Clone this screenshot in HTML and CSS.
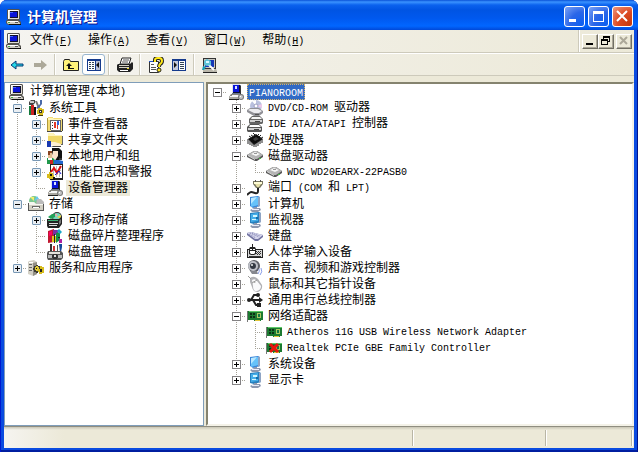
FILE: index.html
```
<!DOCTYPE html>
<html lang="zh-CN">
<head>
  <meta charset="UTF-8">
  <title>计算机管理</title>
  <link rel="stylesheet" href="styles.css">
</head>
<body>
  <!-- icon set, 16x16 each -->
  <svg class="sprite" aria-hidden="true">
    <symbol id="pc" viewBox="0 0 16 16">
      <path d="M1 1l1-1h11l1 1v9l-1 1H2l-1-1z" fill="#55534e"/><path d="M2 1h11v9H2z" fill="#dedbd2"/><path d="M2 1h10v1H3v8H2z" fill="#fff"/>
      <path d="M4 2h8v7H4z" fill="#10102c"/><path d="M4 3h7v5H4z" fill="#0a14d8"/><path d="M4 3h3v1H4z" fill="#4464ff"/>
      <path d="M1 11h12l2 2v3H2l-2-2v-2z" fill="#55534e"/><path d="M1 12h11l2 2v1H2l-1-1z" fill="#cfccc3"/><path d="M2 12h10v1H2z" fill="#fff"/>
      <path d="M9 13h3v1H9z" fill="#555"/><path d="M2 13h2v1H2z" fill="#4a4"/><path d="M3 15h12v1H3z" fill="#111"/>
    </symbol>
    <symbol id="devmgr" viewBox="0 0 16 16">
      <path d="M4 0h8v1h1v9H4z" fill="#6b7690"/><path d="M4 0h8v9H4z" fill="#dfe3ee"/><path d="M5 1h7v8H5z" fill="#10102c"/><path d="M5 1h6v7H5z" fill="#0a14d8"/><path d="M7 2h2v3H7z" fill="#d7e2ff"/>
      <path d="M12 2h1v8h-1z" fill="#333"/><path d="M3 10h10l1 3H1z" fill="#85837c"/><path d="M4 11h8v1H4zM2 12h9v1H2z" fill="#f5f5f5"/><path d="M1 13h10v2H1z" fill="#a9a7a0"/><path d="M1 15h10v1H1z" fill="#222"/>
      <circle cx="13" cy="13" r="3" fill="#777"/><circle cx="13" cy="13" r="2" fill="#c5c5c5"/><path d="M12 12h1v1h-1z" fill="#fff"/>
    </symbol>
    <symbol id="tools" viewBox="0 0 16 16">
      <path d="M1 2l2-2h4v3l-2 2H1z" fill="#444"/><path d="M2 1h4v2H2z" fill="#c9c9c9"/><path d="M3 5h3v10H3z" fill="#c22"/><path d="M1 6h2v9H1z" fill="#147a3c"/>
      <path d="M7 1h2l4 9-2 1z" fill="#777"/><path d="M12 0h2v4l-4 5-2-1 4-4z" fill="#4a6aa8"/><path d="M6 7h2v8H6z" fill="#111"/>
      <path d="M10 8h4v1h2v4h-1v2h-4v-1h-2v-4h1z" fill="#d9bd1d"/><path d="M11 10h3v3h-3z" fill="#333"/><path d="M12 11h1v1h-1z" fill="#fff"/><path d="M10 15h5v1h-5z" fill="#443c10"/>
    </symbol>
    <symbol id="event" viewBox="0 0 16 16">
      <path d="M0 2h1V1h5v1h9v13H0z" fill="#f3dc74"/><path d="M1 2h5l1 1h7v1H1z" fill="#fff6bb"/><path d="M0 15h15v1H0zM15 3h1v12h-1z" fill="#444"/><path d="M0 2h1v13H0z" fill="#b29a3a"/>
      <path d="M4 4h9v10H4z" fill="#fff"/><path d="M4 4h9v1H4zM3 4h1v10H3zM13 4h1v11h-1zM4 14h10v1H4z" fill="#666"/>
      <path d="M5 6h1v1H5zm0 3h1v1H5zm0 3h1v1H5z" fill="#333"/><path d="M7 6h2v6H7z" fill="#e23a2a"/><path d="M10 5h2v4h-2z" fill="#36d"/><path d="M10 9h1v4h-1z" fill="#e23a2a"/>
    </symbol>
    <symbol id="share" viewBox="0 0 16 16">
      <path d="M1 1h5l2 2h7v9H1z" fill="#f0d868"/><path d="M1 1h5l2 2h7v1H1z" fill="#fff5ba"/><path d="M15 4h1v9H6v-1h9z" fill="#666"/>
      <path d="M0 9h4v6H0z" fill="#1838b0"/><path d="M4 10h4l6 2v2H7l-3-1z" fill="#fbeed2"/><path d="M4 14h10v1H6z" fill="#444"/>
    </symbol>
    <symbol id="users" viewBox="0 0 16 16">
      <path d="M5 0h7l3 3v7l-2 2H9L5 6z" fill="#111"/><path d="M6 3h5v5l-2 3H7L5 8z" fill="#fbe3cb"/>
      <path d="M1 5h4v3l1 2H1z" fill="#e3bd92"/><path d="M1 3h4v2H3v2H1z" fill="#842"/>
      <path d="M0 10h6l3 3v3H0z" fill="#20994c"/><path d="M7 12h5l4 1v3H7z" fill="#26c"/><path d="M1 10h4v2H1z" fill="#fff"/><path d="M3 12h3v4H3z" fill="#c22"/><path d="M12 10h3v2h-3z" fill="#333"/>
    </symbol>
    <symbol id="perf" viewBox="0 0 16 16">
      <path d="M3 0h13v16H3z" fill="#222"/><path d="M4 1h11v13H4z" fill="#fff"/><path d="M6 2h1v11H6zm3 0h1v11H9zm3 0h1v11h-1zM4 6h10v1H4z" fill="#bbb"/>
      <path d="M4 8l3-4 3 5 4-7" stroke="#d11" stroke-width="2" fill="none"/><path d="M8 11l4-4 2 3" stroke="#22c" fill="none"/>
      <path d="M2 8h2v1h2v2h1v2H6v2H2v-1H0v-4h2z" fill="#d8bc1c"/><path d="M3 10h2v2H3z" fill="#111"/><path d="M6 13h2v3H4v-1h2z" fill="#111"/>
    </symbol>
    <symbol id="storage" viewBox="0 0 16 16">
      <circle cx="6" cy="5" r="5" fill="#7cc890"/><path d="M6 5L2 1h4z" fill="#f3ef6d"/><path d="M6 5l5-2-2-3z" fill="#67c8ed"/>
      <path d="M9 3h4l3 3v3H8z" fill="#bbb"/><path d="M1 6h5l2 2h8v7H1z" fill="#d1cec2"/><path d="M1 6h5l2 2h8v1H1z" fill="#f5f5f0"/>
      <path d="M0 7h1v7h14V8h1v7H0z" fill="#555"/><path d="M4 10h8v2H4z" fill="#666"/><path d="M5 11h6v1H5z" fill="#fff"/>
    </symbol>
    <symbol id="removable" viewBox="0 0 16 16">
      <circle cx="10" cy="5" r="5" fill="#333"/><circle cx="10" cy="5" r="4" fill="#79d8bb"/><path d="M10 5l4-2v4z" fill="#e8d34c"/><path d="M10 5L7 2h3z" fill="#f1a3b1"/>
      <path d="M1 5l4-3h3v3l-4 2z" fill="#22a058"/><path d="M0 7h12l3-3v8l-3 4H1l-1-2z" fill="#222"/><path d="M1 8h10v1H1z" fill="#3bb071"/><path d="M2 11h9v1H2zM2 13h8v1H2z" fill="#ddd"/><path d="M12 9l2-2v4l-2 2z" fill="#777"/>
    </symbol>
    <symbol id="defrag" viewBox="0 0 16 16">
      <path d="M1 3l6-2v13l-6 1z" fill="#c01830"/><path d="M2 4l3-1v4l-3 1z" fill="#f06"/><path d="M6 2h5v5H6z" fill="#7c2fa5"/><path d="M5 8h5v6H5z" fill="#e4c51e"/>
      <path d="M9 5l4-1v8l-4 3z" fill="#169246"/><path d="M12 1l3 3-2 2-3-3z" fill="#18a6c8"/><path d="M12 11h3v4h-3z" fill="#b020a0"/><path d="M7 6h1v9H7zM11 9h2v1h-2z" fill="#222"/>
    </symbol>
    <symbol id="diskmgr" viewBox="0 0 16 16">
      <path d="M3 0h2v7H3z" fill="#333"/><path d="M6 2h2v6H6z" fill="#c33"/><path d="M10 1h1v7h-1z" fill="#555"/><path d="M12 0h3v3l-1 5h-1z" fill="#15489c"/>
      <path d="M1 7h13l2 2v5l-2 2H1l-1-2V9z" fill="#555"/><path d="M2 8h11v2H2z" fill="#e5e3dd"/><path d="M1 11h5v3H1zM11 11h4v3h-4z" fill="#bbb"/><path d="M6 10h4v1h1v3h-1v1H6v-1H5v-3h1z" fill="#333"/><path d="M7 11h2v2H7z" fill="#ddd"/>
    </symbol>
    <symbol id="services" viewBox="0 0 16 16">
      <path d="M1 1l5-1 3 2v12l-4 2-5-2V2z" fill="#d3d0c5"/><path d="M5 3l4-1v12l-4 2z" fill="#918e85"/><path d="M1 4h3v1H1zM1 7h3v1H1zM1 10h3v1H1z" fill="#666"/><path d="M1 2h4v1H1z" fill="#fff"/>
      <path d="M8 5h2v1h2v2h1v2h-1v2h-2v1H8v-1H6v-2H5V8h1V6h2z" fill="#3d3b2e"/><path d="M8 6h2v1h1v4H8v-1H7V7h1z" fill="#e2cb35"/><path d="M8 8h1v1H8z" fill="#111"/>
      <path d="M12 6h2v1h2v6h-2v1h-3v-2h-1V9h2z" fill="#d7bc1d"/><path d="M12 9h2v3h-2z" fill="#222"/>
    </symbol>
    <symbol id="cd" viewBox="0 0 16 16">
      <circle cx="9" cy="6" r="6" fill="#b9c0de"/><path d="M9 6L5 1l4-1z" fill="#fff"/><path d="M9 6l6-2v4z" fill="#ecc9ea"/><circle cx="9" cy="6" r="2" fill="#fff" stroke="#9a9dc0"/>
      <path d="M0 10l3-2h9l4 3v2l-4 3H7l-7-4z" fill="#909096"/><path d="M1 10l2-1h8l4 2-3 2H7z" fill="#ececf0"/><path d="M8 14h4v1H8z" fill="#555"/>
    </symbol>
    <symbol id="ide" viewBox="0 0 16 16">
      <path d="M5 0h8l3 3v4l-1 1H3L2 7V3z" fill="#666"/><path d="M5 1h8l2 2H4z" fill="#f4f4f4"/><path d="M3 4h12v2H3z" fill="#d0d0d0"/>
      <path d="M3 8h9l3 3v4l-1 1H1l-1-1v-4z" fill="#555"/><path d="M3 9h9l2 2H2z" fill="#fff"/><path d="M1 12h13v2H1z" fill="#d0d0d0"/><path d="M8 5h5v1H8zM7 13h5v1H7z" fill="#444"/>
    </symbol>
    <symbol id="cpu" viewBox="0 0 16 16">
      <path d="M1 7l8-5 7 5-9 6z" fill="#0d0d0d"/><path d="M6 7l3-2 3 2-4 2z" fill="#3c3c3c"/>
      <path d="M2 4l3 2M4 3l3 2M6 1l3 3M12 2l-2 2M14 3l-2 2M16 5l-3 2M1 7v5M3 8v5M5 10v4M7 11v4M9 11v4M11 9v5M13 8v4M15 7v4" stroke="#222" fill="none"/>
    </symbol>
    <symbol id="disk" viewBox="0 0 16 16">
      <path d="M0 7l7-4h3l6 4v2l-6 4H8L0 9z" fill="#555"/><path d="M0 7l7-4h3l6 4-6 4H8z" fill="#b5b5b5"/><path d="M4 6l4-2 5 2-4 2z" fill="#f7f7f7"/><path d="M7 5h3v1H7z" fill="#999"/><path d="M1 8l7 4v-1L1 7z" fill="#ddd"/><path d="M12 10h2v1h-2z" fill="#4b4"/>
    </symbol>
    <symbol id="port" viewBox="0 0 16 16">
      <path d="M6 1h10v3l-3 4H9L6 4z" fill="#77755f"/><path d="M7 2h8v2H7z" fill="#fffdd5"/><path d="M8 4h6l-2 3h-2z" fill="#e5dfa5"/><path d="M8 0h1v2H8zM13 0h1v2h-1z" fill="#555"/>
      <path d="M11 8v3q0 3-3 2t-4-1-4 3" stroke="#222" stroke-width="2" fill="none"/>
    </symbol>
    <symbol id="computer" viewBox="0 0 16 16">
      <path d="M3 1l8-1 2 1v9l-7 2-3-2z" fill="#3b86d8"/><path d="M4 2l7-1v8l-7 2z" fill="#66c2fa"/><path d="M4 2l6-1-6 7z" fill="#b9e8ff"/><path d="M11 1h2v9l-2 1z" fill="#8fa4c4"/>
      <path d="M7 11h3v1h3l1 2-3 2H5l-2-2 4-2z" fill="#8d98b0"/><path d="M5 13h7v1H5z" fill="#eef"/>
    </symbol>
    <symbol id="monitor" viewBox="0 0 16 16">
      <path d="M3 1l9-1 2 1v9l-7 2-4-1z" fill="#277fbd"/><path d="M4 2l7-1v8l-7 1z" fill="#45aeea"/><path d="M6 3h4v2H6zM5 7h4v1H5z" fill="#d5f6ff"/><path d="M9 5h2v2H9z" fill="#186ca9"/><path d="M12 1h2v9l-2 1z" fill="#8fa4c4"/>
      <path d="M7 11h3v1h3l1 2-3 2H5l-2-2 4-2z" fill="#8d98b0"/><path d="M5 13h7v1H5z" fill="#e7ecf8"/>
    </symbol>
    <symbol id="keyboard" viewBox="0 0 16 16">
      <path d="M0 5l4-1 12 3v2l-5 4H8L0 7z" fill="#7072a0"/><path d="M0 5l4-1 12 3-5 4H8z" fill="#d5d5ec"/>
      <path d="M3 5l9 4M5 5l8 3M2 6l7 4" stroke="#8183b0" stroke-dasharray="1 1" fill="none"/>
    </symbol>
    <symbol id="hid" viewBox="0 0 16 16">
      <path d="M0 5h16v9H0z" fill="#222"/><path d="M1 6h14v7H1z" fill="#d8d8d8"/><path d="M9 7h1v1H9zm2 0h1v1h-1zm2 0h1v1h-1zM10 8h1v1h-1zm2 0h1v1h-1zM9 9h1v1H9zm2 0h1v1h-1zm2 0h1v1h-1zM10 10h1v1h-1zm2 0h1v1h-1zM2 12h12v1H2z" fill="#333"/>
      <path d="M3 3h5l1 2v5l-2 1H4l-2-1V5z" fill="#222"/><path d="M3 5h5v4l-1 1H4L3 9z" fill="#fff"/><path d="M5 0h1v7H5zM3 6h5v1H3z" fill="#222"/>
    </symbol>
    <symbol id="sound" viewBox="0 0 16 16">
      <circle cx="7" cy="6" r="6" fill="#5d5f67"/><circle cx="6" cy="6" r="5" fill="#bfc1c8"/><circle cx="6" cy="6" r="3" fill="#333842"/><circle cx="5" cy="5" r="1" fill="#eee"/><path d="M3 11h7l1 3H5z" fill="#85878e"/>
      <path d="M12 9q1 2-1 5M14 8q2 4-1 7" stroke="#8a9ee8" fill="none"/>
    </symbol>
    <symbol id="mouse" viewBox="0 0 16 16">
      <path d="M3 2q4-3 8 1l4 6q1 5-4 7-5 0-6-5L3 6z" fill="#b1b1b5"/><path d="M5 4q3-2 5 1l4 5q0 4-4 5t-4-5z" fill="#f9f9fb"/><path d="M5 7l5-3M7 5l1 2" stroke="#999" fill="none"/><path d="M4 3L1 0" stroke="#999"/>
    </symbol>
    <symbol id="usb" viewBox="0 0 16 16">
      <path d="M1 8h12M4 8l3-5h4M6 8l3 5h3" stroke="#222" stroke-width="2" fill="none"/><circle cx="2" cy="8" r="2" fill="#222"/><path d="M12 5l4 3-4 3z" fill="#222"/><circle cx="11" cy="3" r="2" fill="#222"/><path d="M10 11h4v4h-4z" fill="#222"/>
    </symbol>
    <symbol id="net" viewBox="0 0 16 16">
      <path d="M0 3h1v11H0z" fill="#777"/><path d="M1 3h15v9h-2v1H7v-1H1z" fill="#1c7a31"/><path d="M2 3h14v1H2z" fill="#5fca68"/>
      <path d="M3 5h2v2H3zM6 5h2v2H6zM3 8h2v2H3zM6 8h2v2H6z" fill="#0c3015"/><path d="M10 5h4v5h-4z" fill="#a9c860"/><path d="M11 6h2v3h-2z" fill="#174"/><path d="M8 12h5v1H8z" fill="#e3c63b"/>
    </symbol>
    <symbol id="netoff" viewBox="0 0 16 16">
      <use href="#net"/><path d="M4 4l8 8M12 4l-8 8" stroke="#e8150c" stroke-width="3" fill="none"/>
    </symbol>
    <symbol id="back" viewBox="0 0 16 16">
      <path d="M2 8l5-4v3h7v2H7v3z" fill="#25d8e6" stroke="#053a78"/>
    </symbol>
    <symbol id="forward" viewBox="0 0 16 16"><path d="M15 8L9 3v3H2v4h7v3z" fill="#aca899"/></symbol>
    <symbol id="up" viewBox="0 0 16 16">
      <path d="M.5 4.500l1-2h5l1 2h8v9H.5z" fill="#fff27a" stroke="#222"/><path d="M6 6L3 9h2v3h6v-1H7V9h2z" fill="#111"/>
    </symbol>
    <symbol id="panel" viewBox="0 0 16 16">
      <path d="M1 2h14v12H1z" fill="#153a8c"/><path d="M2 4h7v9H2z" fill="#fff"/><path d="M10 4h4v9h-4z" fill="#b9bfd5"/><path d="M3 5h2v1H3zM3 7h2v1H3zM3 9h2v1H3zM3 11h2v1H3zM6 5h2v1H6zM6 7h2v1H6zM6 9h2v1H6zM6 11h2v1H6z" fill="#345"/><path d="M13 5v6l-3-3z" fill="#111"/>
    </symbol>
    <symbol id="actions" viewBox="0 0 16 16">
      <path d="M1 2h14v12H1z" fill="#153a8c"/><path d="M2 4h5v9H2z" fill="#c4c9da"/><path d="M8 4h6v9H8z" fill="#fff"/><path d="M9 5h4v1H9zM9 7h4v1H9zM9 9h4v1H9zM9 11h4v1H9z" fill="#345"/><path d="M3 5v6l3-3z" fill="#111"/>
    </symbol>
    <symbol id="print" viewBox="0 0 16 16">
      <path d="M5 1h9l-2 6H3z" fill="#fff" stroke="#222"/><path d="M6 3h6M5 5h6" stroke="#555"/>
      <path d="M1 7h12l2-2 1 1v6l-3 3H2l-2-2V8z" fill="#222"/><path d="M2 8h10v1H2zM2 10h10v1H2z" fill="#d5d2c5"/><path d="M3 13h8v1H3z" fill="#fff"/><path d="M10 11h2v1h-2z" fill="#e8d528"/>
    </symbol>
    <symbol id="help" viewBox="0 0 16 16">
      <path d="M1.500 4.500h9v11h-9z" fill="#fff" stroke="#333"/><path d="M3 7h3v1H3zM3 10h5v1H3zM3 12h5v1H3z" fill="#555"/><path d="M1 4h5v1H1z" fill="#25c"/>
      <path d="M7 5V3q0-2 3-2h1q3 0 3 3 0 2-2 3-1 1-1 3" stroke="#222" stroke-width="4" fill="none"/><path d="M7 5V3q0-2 3-2h1q3 0 3 3 0 2-2 3-1 1-1 3" stroke="#ffe818" stroke-width="2" fill="none"/><circle cx="11" cy="13" r="2" fill="#ffe818" stroke="#222"/>
    </symbol>
    <symbol id="scan" viewBox="0 0 16 16">
      <path d="M1 1h13v11H1z" fill="#333"/><path d="M2 2h11v9H2z" fill="#c8c6be"/><path d="M3 3h9v7H3z" fill="#1638b8"/><path d="M1 12h13l1 2v2H1z" fill="#bbb8ac"/><path d="M1 15h14v1H1z" fill="#222"/>
      <path d="M6 7l6 6" stroke="#fff" stroke-width="2"/><path d="M2 4l3-2 4 2v4L5 9 2 8z" fill="#5fc4d8"/><path d="M4 4h3v2H4z" fill="#d8f8ff"/><path d="M1 9l3 1-2 3H0z" fill="#16a0b8"/>
    </symbol>
  </svg>

  <div class="window">
    <header class="titlebar">
      <svg class="icon"><use href="#pc"/></svg>
      <h1>计算机管理</h1>
      <button class="caption" aria-label="最小化"><svg viewBox="0 0 19 19"><path d="M4 12h7v3H4z" fill="#fff"/></svg></button>
      <button class="caption" aria-label="最大化"><svg viewBox="0 0 19 19"><path d="M4 4h11v11H4zM5 7v7h9V7z" fill="#fff" fill-rule="evenodd"/></svg></button>
      <button class="caption close" aria-label="关闭"><svg viewBox="0 0 19 19"><path d="M4 4l10 10M14 4L4 14" stroke="#fff" stroke-width="2"/></svg></button>
    </header>

    <nav class="menubar">
      <svg class="icon"><use href="#pc"/></svg>
      <button>文件<span class="en">(<u>F</u>)</span></button>
      <button>操作<span class="en">(<u>A</u>)</span></button>
      <button>查看<span class="en">(<u>V</u>)</span></button>
      <button>窗口<span class="en">(<u>W</u>)</span></button>
      <button>帮助<span class="en">(<u>H</u>)</span></button>
      <div class="mdi">
        <button aria-label="最小化窗口"><svg viewBox="0 0 14 12"><path d="M3 8h7v2H3z" fill="#000"/></svg></button>
        <button aria-label="还原窗口"><svg viewBox="0 0 14 12"><path d="M4 1h7v6H9V6h1V3H5v1H4zM2 4h7v6H2zM3 6v3h5V6z" fill="#000" fill-rule="evenodd"/></svg></button>
        <button aria-label="关闭窗口" disabled><svg viewBox="0 0 14 12"><path d="M3 2l7 7M10 2l-7 7" stroke="#aca899" stroke-width="2"/></svg></button>
      </div>
    </nav>

    <div class="toolbar">
      <button aria-label="后退"><svg class="icon"><use href="#back"/></svg></button>
      <button aria-label="前进" disabled><svg class="icon"><use href="#forward"/></svg></button>
      <span class="sep"></span>
      <button aria-label="向上"><svg class="icon"><use href="#up"/></svg></button>
      <button class="pressed" aria-label="显示/隐藏控制台树"><svg class="icon"><use href="#panel"/></svg></button>
      <span class="sep"></span>
      <button aria-label="打印"><svg class="icon"><use href="#print"/></svg></button>
      <span class="sep"></span>
      <button aria-label="帮助"><svg class="icon"><use href="#help"/></svg></button>
      <button aria-label="显示/隐藏操作窗格"><svg class="icon"><use href="#actions"/></svg></button>
      <span class="sep"></span>
      <button aria-label="扫描检测硬件改动"><svg class="icon"><use href="#scan"/></svg></button>
    </div>

    <main class="panes">
      <section class="pane console">
        <div class="row"><svg class="icon"><use href="#pc"/></svg><span class="label">计算机管理<span class="en">(</span>本地<span class="en">)</span></span></div>
        <ul class="tree">
          <li>
            <div class="row"><span class="twig"><button class="toggle open" aria-label="折叠"></button></span><svg class="icon"><use href="#tools"/></svg><span class="label">系统工具</span></div>
            <ul class="tree">
              <li><div class="row"><span class="twig"><button class="toggle" aria-label="展开"></button></span><svg class="icon"><use href="#event"/></svg><span class="label">事件查看器</span></div></li>
              <li><div class="row"><span class="twig"><button class="toggle" aria-label="展开"></button></span><svg class="icon"><use href="#share"/></svg><span class="label">共享文件夹</span></div></li>
              <li><div class="row"><span class="twig"><button class="toggle" aria-label="展开"></button></span><svg class="icon"><use href="#users"/></svg><span class="label">本地用户和组</span></div></li>
              <li><div class="row"><span class="twig"><button class="toggle" aria-label="展开"></button></span><svg class="icon"><use href="#perf"/></svg><span class="label">性能日志和警报</span></div></li>
              <li><div class="row"><span class="twig"></span><svg class="icon"><use href="#devmgr"/></svg><span class="label current">设备管理器</span></div></li>
            </ul>
          </li>
          <li>
            <div class="row"><span class="twig"><button class="toggle open" aria-label="折叠"></button></span><svg class="icon"><use href="#storage"/></svg><span class="label">存储</span></div>
            <ul class="tree">
              <li><div class="row"><span class="twig"><button class="toggle" aria-label="展开"></button></span><svg class="icon"><use href="#removable"/></svg><span class="label">可移动存储</span></div></li>
              <li><div class="row"><span class="twig"></span><svg class="icon"><use href="#defrag"/></svg><span class="label">磁盘碎片整理程序</span></div></li>
              <li><div class="row"><span class="twig"></span><svg class="icon"><use href="#diskmgr"/></svg><span class="label">磁盘管理</span></div></li>
            </ul>
          </li>
          <li>
            <div class="row"><span class="twig"><button class="toggle" aria-label="展开"></button></span><svg class="icon"><use href="#services"/></svg><span class="label">服务和应用程序</span></div>
          </li>
        </ul>
      </section>

      <section class="pane devices">
        <ul class="tree">
          <li>
            <div class="row"><span class="twig"><button class="toggle open" aria-label="折叠"></button></span><svg class="icon"><use href="#devmgr"/></svg><span class="label selected"><span class="en">PIANOROOM</span></span></div>
            <ul class="tree">
              <li><div class="row"><span class="twig"><button class="toggle" aria-label="展开"></button></span><svg class="icon"><use href="#cd"/></svg><span class="label"><span class="en">DVD/CD-ROM </span>驱动器</span></div></li>
              <li><div class="row"><span class="twig"><button class="toggle" aria-label="展开"></button></span><svg class="icon"><use href="#ide"/></svg><span class="label"><span class="en">IDE ATA/ATAPI </span>控制器</span></div></li>
              <li><div class="row"><span class="twig"><button class="toggle" aria-label="展开"></button></span><svg class="icon"><use href="#cpu"/></svg><span class="label">处理器</span></div></li>
              <li>
                <div class="row"><span class="twig"><button class="toggle open" aria-label="折叠"></button></span><svg class="icon"><use href="#disk"/></svg><span class="label">磁盘驱动器</span></div>
                <ul class="tree">
                  <li><div class="row"><span class="twig"></span><svg class="icon"><use href="#disk"/></svg><span class="label"><span class="en">WDC WD20EARX-22PASB0</span></span></div></li>
                </ul>
              </li>
              <li><div class="row"><span class="twig"><button class="toggle" aria-label="展开"></button></span><svg class="icon"><use href="#port"/></svg><span class="label">端口<span class="en"> (COM </span>和<span class="en"> LPT)</span></span></div></li>
              <li><div class="row"><span class="twig"><button class="toggle" aria-label="展开"></button></span><svg class="icon"><use href="#computer"/></svg><span class="label">计算机</span></div></li>
              <li><div class="row"><span class="twig"><button class="toggle" aria-label="展开"></button></span><svg class="icon"><use href="#monitor"/></svg><span class="label">监视器</span></div></li>
              <li><div class="row"><span class="twig"><button class="toggle" aria-label="展开"></button></span><svg class="icon"><use href="#keyboard"/></svg><span class="label">键盘</span></div></li>
              <li><div class="row"><span class="twig"><button class="toggle" aria-label="展开"></button></span><svg class="icon"><use href="#hid"/></svg><span class="label">人体学输入设备</span></div></li>
              <li><div class="row"><span class="twig"><button class="toggle" aria-label="展开"></button></span><svg class="icon"><use href="#sound"/></svg><span class="label">声音、视频和游戏控制器</span></div></li>
              <li><div class="row"><span class="twig"><button class="toggle" aria-label="展开"></button></span><svg class="icon"><use href="#mouse"/></svg><span class="label">鼠标和其它指针设备</span></div></li>
              <li><div class="row"><span class="twig"><button class="toggle" aria-label="展开"></button></span><svg class="icon"><use href="#usb"/></svg><span class="label">通用串行总线控制器</span></div></li>
              <li>
                <div class="row"><span class="twig"><button class="toggle open" aria-label="折叠"></button></span><svg class="icon"><use href="#net"/></svg><span class="label">网络适配器</span></div>
                <ul class="tree">
                  <li><div class="row"><span class="twig"></span><svg class="icon"><use href="#net"/></svg><span class="label"><span class="en">Atheros 11G USB Wireless Network Adapter</span></span></div></li>
                  <li><div class="row"><span class="twig"></span><svg class="icon"><use href="#netoff"/></svg><span class="label"><span class="en">Realtek PCIe GBE Family Controller</span></span></div></li>
                </ul>
              </li>
              <li><div class="row"><span class="twig"><button class="toggle" aria-label="展开"></button></span><svg class="icon"><use href="#computer"/></svg><span class="label">系统设备</span></div></li>
              <li><div class="row"><span class="twig"><button class="toggle" aria-label="展开"></button></span><svg class="icon"><use href="#monitor"/></svg><span class="label">显示卡</span></div></li>
            </ul>
          </li>
        </ul>
      </section>
    </main>

    <footer class="statusbar">
      <span class="cell main"></span>
      <span class="cell middle"></span>
      <span class="cell last"></span>
    </footer>
  </div>
</body>
</html>
```
FILE: styles.css
```
* {
  box-sizing: border-box;
}
body {
  margin: 0;
  background: #fff;
  font-family: "Liberation Sans", "Noto Sans CJK SC", sans-serif;
  font-size: 12px;
  line-height: 16px;
  color: #000;
}
button {
  margin: 0;
  padding: 0;
  border: 0;
  background: none;
  font: inherit;
  color: inherit;
}
.sprite {
  position: absolute;
  width: 0;
  height: 0;
}
.icon {
  display: block;
  flex: none;
  width: 16px;
  height: 16px;
}
.en {
  font-family: "Liberation Mono", monospace;
  font-size: 10px;
  white-space: pre;
}

/* window frame */
.window {
  display: flex;
  flex-direction: column;
  height: 100vh;
  padding: 0 4px 4px;
  border-radius: 7px 7px 0 0;
  background: #0a4be0;
  box-shadow: inset 1px 0 #0019cf, inset -1px 0 #00138c, inset 0 -2px #001ea0;
  overflow: hidden;
}
.titlebar {
  display: flex;
  align-items: center;
  flex: none;
  gap: 2px;
  height: 30px;
  margin: 0 -4px;
  padding: 3px 5px 0 6px;
  background: linear-gradient(#0a52d8 0, #3a93ff 2px, #0b62ee 5px, #0054e3 10px, #0058ee 18px, #0166ff 26px, #0048d8 30px);
}
.titlebar h1 {
  flex: 1;
  margin: 0;
  padding-left: 3px;
  font-size: 14px;
  line-height: 20px;
  color: #fff;
  text-shadow: 1px 1px #0f1089;
}
.caption {
  width: 21px;
  height: 21px;
  border: 1px solid #fff;
  border-radius: 3px;
  background: radial-gradient(circle at 90% 90%, #0d5ff0, #2b66e8 50%, #7ea4f5);
}
.caption svg {
  display: block;
  width: 19px;
  height: 19px;
}
.caption + .caption {
  margin-left: 1px;
}
.caption.close {
  background: radial-gradient(circle at 90% 90%, #c63a0e, #dd4a22 50%, #f09a80);
}

/* menu */
.menubar {
  display: flex;
  align-items: center;
  flex: none;
  height: 23px;
  padding-left: 2px;
  border-bottom: 1px solid #cdcabb;
  background: linear-gradient(90deg, #f5f4f0, #ece9d8);
}
.menubar > button {
  padding: 0 8px;
}
.mdi {
  display: flex;
  align-self: stretch;
  align-items: center;
  margin-left: auto;
  padding: 0 2px 0 3px;
  border-left: 1px solid #cdcabb;
  box-shadow: inset 1px 0 #fff;
}
.mdi button {
  width: 16px;
  height: 15px;
  border: 1px solid;
  border-color: #fff #716f64 #716f64 #fff;
  background: #ece9d8;
  box-shadow: inset -1px -1px #aca899;
}
.mdi button:last-child {
  margin-left: 2px;
}
.mdi svg {
  display: block;
  width: 14px;
  height: 12px;
}

/* toolbar */
.toolbar {
  display: flex;
  align-items: center;
  flex: none;
  height: 23px;
  padding-left: 1px;
  border-top: 1px solid #fff;
  border-bottom: 1px solid #cdcabb;
  background: linear-gradient(90deg, #f5f4f0, #ece9d8);
}
.toolbar button {
  display: flex;
  align-items: center;
  justify-content: center;
  width: 23px;
  height: 21px;
}
.toolbar .pressed {
  border: 1px solid #98b5cf;
  border-radius: 3px;
  background: #fff;
}
.sep {
  align-self: stretch;
  width: 2px;
  margin: 0 3px;
  border-left: 1px solid #cdcabb;
  border-right: 1px solid #fff;
}

/* panes */
.panes {
  display: flex;
  flex: 1;
  gap: 2px;
  min-height: 0;
  padding-top: 6px;
  background: #ece9d8;
}
.pane {
  background: #fff;
  overflow: hidden;
}
.console {
  flex: 0 0 200px;
  padding: 1px 3px;
  border: 1px solid #7f9db9;
}
.devices {
  flex: 1;
  border: 2px solid;
  border-color: #85836f #f4f2e8 #f4f2e8 #85836f;
}

/* tree */
.tree {
  margin: 0;
  padding: 0;
  list-style: none;
}
.tree .tree {
  padding-left: 19px;
}
.tree li {
  position: relative;
}
.tree li::before {
  content: "";
  position: absolute;
  top: 0;
  bottom: 0;
  left: 9px;
  width: 1px;
  background: repeating-linear-gradient(#a5a298 0 1px, transparent 1px 2px);
}
.tree li:last-child::before {
  bottom: auto;
  height: 8px;
}
.devices > .tree > li::before {
  display: none;
}
.row {
  display: flex;
  align-items: center;
  height: 16px;
}
.row .icon {
  margin: 0 3px 0 1px;
}
.twig {
  display: flex;
  align-items: center;
  flex: none;
  width: 19px;
  height: 16px;
  padding-left: 5px;
  background: repeating-linear-gradient(90deg, #a5a298 0 1px, transparent 1px 2px) 9px 8px / 10px 1px no-repeat;
}
.toggle {
  position: relative;
  width: 9px;
  height: 9px;
  border: 1px solid #848284;
  background:
    linear-gradient(#000, #000) 1px 3px / 5px 1px no-repeat,
    linear-gradient(#000, #000) 3px 1px / 1px 5px no-repeat,
    #fff;
}
.toggle.open {
  background:
    linear-gradient(#000, #000) 1px 3px / 5px 1px no-repeat,
    #fff;
}
.console .toggle {
  border-color: #7898b5;
  border-radius: 1px;
  background-color: #e9eef3;
}
.label {
  padding: 0 2px;
  white-space: nowrap;
}
.current {
  background: #ece9d8;
}
.selected {
  height: 16px;
  background: #316ac5;
  color: #fff;
  outline: 1px dotted #d8b56a;
  outline-offset: -1px;
}

/* status bar */
.statusbar {
  display: flex;
  flex: none;
  height: 22px;
  padding: 3px 2px 2px 0;
  border-top: 1px solid #8f8d80;
  background: linear-gradient(#c9c6b6, transparent 3px), linear-gradient(90deg, #f5f4f0, #ece9d8 60px);
}
.cell {
  border-right: 1px solid #b9b6a5;
  box-shadow: 1px 0 #fff;
}
.cell.main {
  flex: 1;
}
.cell.middle {
  width: 133px;
}
.cell.last {
  width: 86px;
}
```
